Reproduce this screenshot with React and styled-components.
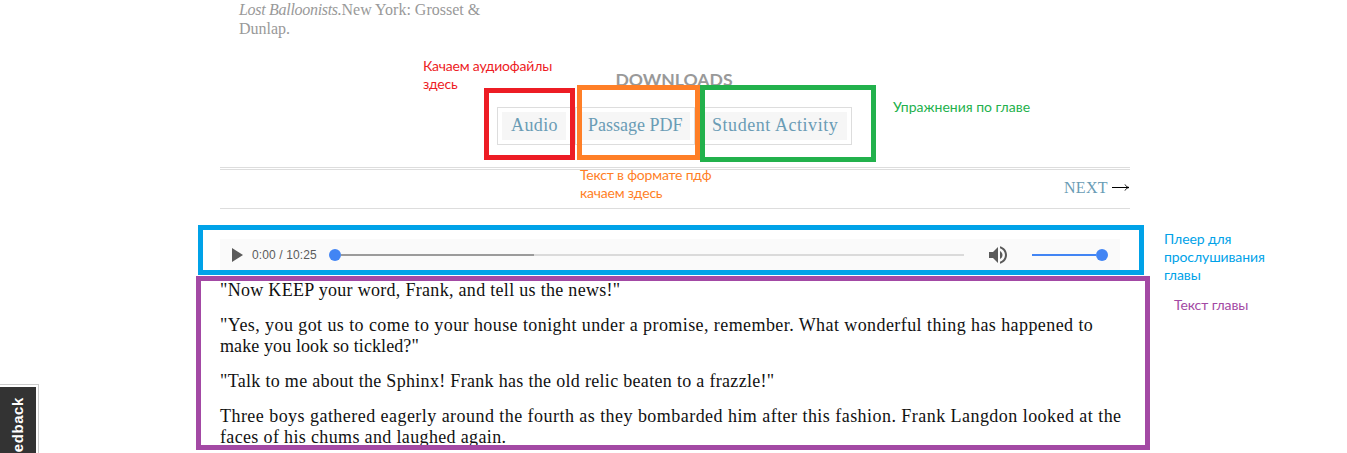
import React from "react";
import styled, { createGlobalStyle } from "styled-components";

const slab = '"Liberation Serif", serif';
const link = "#6a9cb5";

const GlobalStyle = createGlobalStyle`
  body { margin: 0; background: #fff; }
`;

const Page = styled.div`
  position: relative;
  height: 453px;
  overflow: hidden;
`;

const Article = styled.main`
  width: 910px;
  margin-left: 220px;
  font-family: ${slab};
`;

const Citation = styled.p`
  width: 260px;
  margin: 0 0 0 19px;
  font-size: 16px;
  line-height: 19px;
  color: #999;
  white-space: nowrap;
`;

const BookTitle = styled.em`
  letter-spacing: -0.3px;
`;

const Heading = styled.h2`
  margin: 31px 0 0;
  padding-right: 2px;
  text-align: center;
  font: bold 17.6px/22px Lato, sans-serif;
  color: #999;
`;

const ButtonRow = styled.div`
  display: flex;
  justify-content: center;
  gap: 4px;
  height: 38px;
  margin-top: 16px;
  padding-right: 1px;
`;

const DownloadButton = styled.a`
  box-sizing: border-box;
  width: ${(p) => p.$width}px;
  padding: 4px;
  border: 1px solid #ddd;
  color: ${link};
`;

const ButtonFace = styled.span`
  display: block;
  height: 28px;
  padding-left: ${(p) => p.$pad}px;
  background: #f6f6f6;
  font-size: 18px;
  line-height: 27px;
  letter-spacing: ${(p) => p.$spacing}px;
  white-space: nowrap;
`;

const ChapterNav = styled.nav`
  box-sizing: border-box;
  display: flex;
  justify-content: flex-end;
  gap: 4px;
  height: 42px;
  margin-top: 22px;
  padding-top: 8px;
  border-top: 3px double #ddd;
  border-bottom: 1px solid #ddd;
  font-size: 16px;
  line-height: 19px;
`;

const NextLink = styled.a`
  color: ${link};
  letter-spacing: 0.35px;
`;

const Arrow = styled.svg`
  width: 18px;
  height: 19px;
`;

const Player = styled.div`
  box-sizing: border-box;
  display: flex;
  align-items: center;
  width: 900px;
  height: 32px;
  margin-top: 30px;
  padding: 0 12px;
  background: #fafafa;
`;

const PlayIcon = styled.svg`
  width: 11px;
  height: 14px;
`;

const Time = styled.span`
  width: 77px;
  margin-left: 9px;
  font: 12px/16px "Liberation Sans", sans-serif;
  letter-spacing: 0.12px;
  color: #5a5a5a;
`;

const Track = styled.div`
  display: flex;
  align-items: center;
  width: ${(p) => p.$width}px;
  height: 12px;
`;

const Segment = styled.span`
  flex: ${(p) => p.$size ?? 1};
  height: 2px;
  background: ${(p) => p.$color};
`;

const Thumb = styled.span`
  width: 12px;
  height: 12px;
  border-radius: 50%;
  background: #4285f4;
`;

const SpeakerIcon = styled.svg`
  width: 24px;
  height: 24px;
  margin: 0 22px;
`;

const Story = styled.section`
  display: flex;
  flex-direction: column;
  gap: 14px;
  margin-top: 9px;
  font-size: 18px;
  line-height: 21px;
  color: #111;
`;

const Paragraph = styled.p`
  margin: 0;
`;

const Line = styled.span`
  display: block;
  letter-spacing: ${(p) => p.$spacing}px;
  white-space: nowrap;
`;

const Frame = styled.div`
  position: absolute;
  box-sizing: border-box;
  left: ${(p) => p.$x}px;
  top: ${(p) => p.$y}px;
  width: ${(p) => p.$w}px;
  height: ${(p) => p.$h}px;
  border: 5px solid ${(p) => p.$color};
`;

const Note = styled.div`
  position: absolute;
  left: ${(p) => p.$x}px;
  top: ${(p) => p.$y}px;
  font: 14px/18px Lato, "Open Sans", sans-serif;
  letter-spacing: ${(p) => p.$spacing}px;
  color: ${(p) => p.$color};
  white-space: pre;
`;

const FeedbackTab = styled.aside`
  position: absolute;
  box-sizing: border-box;
  left: 0;
  top: 384px;
  width: 39px;
  height: 90px;
  padding: 2px 2px 0 0;
  border: solid #ccc;
  border-width: 1px 1px 0 0;
`;

const FeedbackLabel = styled.span`
  box-sizing: border-box;
  display: block;
  width: 36px;
  height: 87px;
  padding-bottom: 10px;
  background: #333;
  color: #fff;
  font: bold 15px/36px "Liberation Sans", sans-serif;
  letter-spacing: 0.6px;
  text-align: right;
  writing-mode: vertical-rl;
  transform: rotate(180deg);
  white-space: nowrap;
`;

const red = "#ed1c24";
const orange = "#ff7f27";
const green = "#22b14c";
const blue = "#00a2e8";
const purple = "#a349a4";

const downloads = [
  { label: "Audio", width: 74, pad: 9, spacing: 0.4 },
  { label: "Passage PDF", width: 120, pad: 8, spacing: 0 },
  { label: "Student Activity", width: 153, pad: 8, spacing: 0.55 },
];

const story = [
  [['"Now KEEP your word, Frank, and tell us the news!"', 0.3]],
  [
    ['"Yes, you got us to come to your house tonight under a promise, remember. What wonderful thing has happened to', 0.42],
    ['make you look so tickled?"', 0.1],
  ],
  [['"Talk to me about the Sphinx! Frank has the old relic beaten to a frazzle!"', 0.31]],
  [
    ["Three boys gathered eagerly around the fourth as they bombarded him after this fashion. Frank Langdon looked at the", 0.455],
    ["faces of his chums and laughed again.", 0.35],
  ],
];

export default function App() {
  return (
    <Page>
      <GlobalStyle />
      <Article>
        <Citation>
          <BookTitle>Lost Balloonists.</BookTitle>New York: Grosset &amp;
          <br />
          Dunlap.
        </Citation>
        <Heading>DOWNLOADS</Heading>
        <ButtonRow>
          {downloads.map((d) => (
            <DownloadButton key={d.label} $width={d.width}>
              <ButtonFace $pad={d.pad} $spacing={d.spacing}>{d.label}</ButtonFace>
            </DownloadButton>
          ))}
        </ButtonRow>
        <ChapterNav>
          <NextLink>NEXT</NextLink>
          <Arrow viewBox="0 0 18 19" fill="none" stroke="#000">
            <path d="M0 9.5H16.5M13 6.5C14 8.3 15 9 17 9.5C15 10 14 10.7 13 12.5" />
          </Arrow>
        </ChapterNav>
        <Player>
          <PlayIcon viewBox="0 0 11 14" fill="#5a5a5a">
            <path d="M0 0V14L11 7Z" />
          </PlayIcon>
          <Time>0:00 / 10:25</Time>
          <Track $width={635}>
            <Thumb />
            <Segment $size="0 0 193px" $color="#9b9b9b" />
            <Segment $color="#dadada" />
          </Track>
          <SpeakerIcon viewBox="0 0 24 24" fill="#5a5a5a">
            <path d="M3 9v6h4l5 5V4L7 9H3zm13.5 3c0-1.77-1.02-3.29-2.5-4.03v8.05c1.48-.73 2.5-2.25 2.5-4.02zM14 3.23v2.06c2.89.86 5 3.54 5 6.71s-2.11 5.85-5 6.71v2.06c4.01-.91 7-4.49 7-8.77s-2.99-7.86-7-8.77z" />
          </SpeakerIcon>
          <Track $width={76}>
            <Segment $color="#4285f4" />
            <Thumb />
          </Track>
        </Player>
        <Story>
          {story.map((lines, i) => (
            <Paragraph key={i}>
              {lines.map(([text, spacing]) => (
                <Line key={text} $spacing={spacing}>{text}</Line>
              ))}
            </Paragraph>
          ))}
        </Story>
      </Article>

      <Frame $x={484} $y={88} $w={91} $h={72} $color={red} />
      <Frame $x={577} $y={85} $w={123} $h={75} $color={orange} />
      <Frame $x={700} $y={85} $w={176} $h={77} $color={green} />
      <Frame $x={198} $y={225} $w={946} $h={50} $color={blue} />
      <Frame $x={196} $y={276} $w={954} $h={174} $color={purple} />

      <Note $x={423} $y={57} $spacing={-0.2} $color={red}>{"Качаем аудиофайлы\nздесь"}</Note>
      <Note $x={580} $y={166} $spacing={-0.2} $color={orange}>{"Текст в формате пдф\nкачаем здесь"}</Note>
      <Note $x={893} $y={98} $spacing={0} $color={green}>Упражнения по главе</Note>
      <Note $x={1164} $y={230} $spacing={-0.1} $color={blue}>{"Плеер для\nпрослушивания\nглавы"}</Note>
      <Note $x={1174} $y={296} $spacing={-0.1} $color={purple}>Текст главы</Note>

      <FeedbackTab>
        <FeedbackLabel>Feedback</FeedbackLabel>
      </FeedbackTab>
    </Page>
  );
}
